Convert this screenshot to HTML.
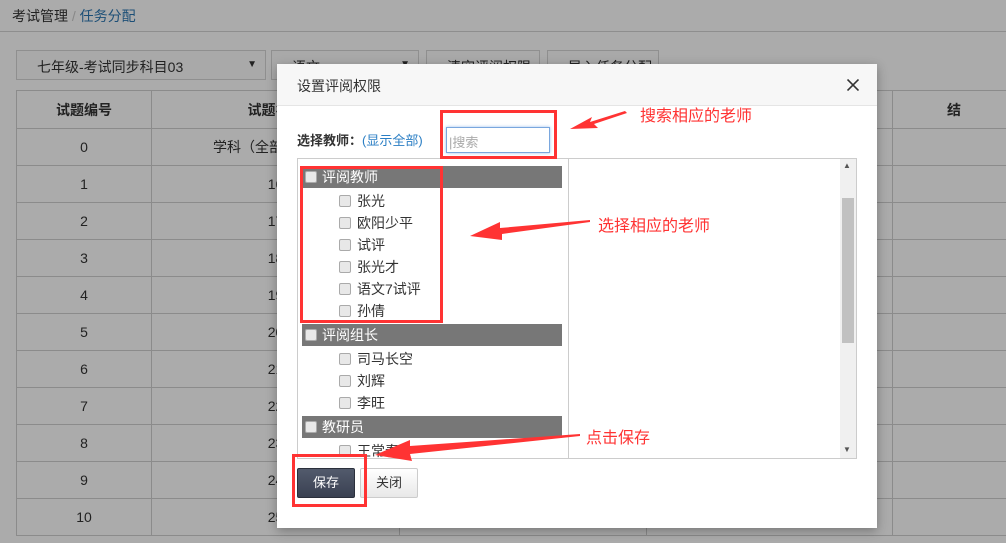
<!DOCTYPE html>
<html><head><meta charset="utf-8"><style>
*{margin:0;padding:0;box-sizing:border-box}
html{width:1006px;height:543px;overflow:hidden}
body{width:1006px;height:543px;overflow:hidden;background:#ababab;font-family:"Liberation Sans","Noto Sans CJK SC",sans-serif;font-size:13px;color:#333;position:relative}
.abs{position:absolute}
.bc{left:0;top:0;width:1006px;height:32px;border-bottom:1px solid #8e8e8e;padding:6px 12px;font-size:14px;color:#222}
.bc span{color:#1c4f77}
.dd{top:50px;height:30px;border:1px solid #8f8f8f;background:#a9a9a9;font-size:14px;color:#222;padding:6px 0 0 20px}
table{position:absolute;left:16px;top:90px;border-collapse:collapse;width:1000px}
td{border:1px solid #8b8b8b;height:37px;text-align:center;font-size:14px;color:#222}
th{border:1px solid #8b8b8b;height:38px;font-size:14px;color:#222}
.modal{left:277px;top:64px;width:600px;height:464px;background:#fff;box-shadow:0 3px 10px rgba(0,0,0,.3)}
.mh{position:absolute;left:0;top:0;width:600px;height:42px;background:#f7f7f7;border-bottom:1px solid #e5e5e5;padding:12px 20px;font-size:14px;color:#333}
.grp{position:absolute;left:25px;width:260px;height:22px;background:#777;color:#fff;font-size:14px;padding:1px 0 0 20px}
.cb{position:absolute;width:12px;height:12px;border:1px solid #aaa;border-radius:2px;background:#e8e8e8}
.it{position:absolute;left:80px;font-size:14px;color:#333}
.red{border:3px solid #f33;position:absolute}
.note{position:absolute;color:#f33;font-size:16px}
</style></head><body>
<div class="abs bc">考试管理 <b style="color:#888;font-weight:normal">/</b> <span>任务分配</span></div>
<div class="abs dd" style="left:16px;width:250px">七年级-考试同步科目03<span style="position:absolute;right:8px;top:8px;font-size:10px">▼</span></div>
<div class="abs dd" style="left:271px;width:148px">语文<span style="position:absolute;right:8px;top:8px;font-size:10px">▼</span></div>
<div class="abs dd" style="left:426px;width:114px">清空评阅权限</div>
<div class="abs dd" style="left:547px;width:112px">导入任务分配</div>
<table>
<tr><th style="width:135px">试题编号</th><th style="width:248px">试题名称</th><th style="width:247px"></th><th style="width:246px"></th><th>结</th></tr>
<tr><td>0</td><td style="text-align:left;padding-left:61px">学科（全部）</td><td></td><td></td><td></td></tr>
<tr><td>1</td><td>16</td><td></td><td></td><td></td></tr>
<tr><td>2</td><td>17</td><td></td><td></td><td></td></tr>
<tr><td>3</td><td>18</td><td></td><td></td><td></td></tr>
<tr><td>4</td><td>19</td><td></td><td></td><td></td></tr>
<tr><td>5</td><td>20</td><td></td><td></td><td></td></tr>
<tr><td>6</td><td>21</td><td></td><td></td><td></td></tr>
<tr><td>7</td><td>22</td><td></td><td></td><td></td></tr>
<tr><td>8</td><td>23</td><td></td><td></td><td></td></tr>
<tr><td>9</td><td>24</td><td></td><td></td><td></td></tr>
<tr><td>10</td><td>25</td><td></td><td></td><td></td></tr>
</table>
<div class="abs modal">
<div class="mh">设置评阅权限<svg style="position:absolute;right:18px;top:15px" width="12" height="12"><path d="M0.5 0.5L11.5 11.5M11.5 0.5L0.5 11.5" stroke="#333" stroke-width="1.6"/></svg></div>
<div class="abs" style="left:20px;top:66px;font-size:13px;font-weight:bold;color:#333">选择教师：<span style="font-weight:normal;color:#2a7ec4">(显示全部)</span></div>
<div class="abs" style="left:169px;top:63px;width:104px;height:26px;border:1px solid #7aa7de;box-shadow:0 0 3px #9bc0ef;font-size:13px;color:#aaa;padding:4px 2px">|搜索</div>
<div class="abs" style="left:20px;top:94px;width:560px;height:301px;border:1px solid #ccc;overflow:hidden">
 <div class="abs" style="left:270px;top:0;width:1px;height:300px;background:#ccc"></div>
 <div class="abs" style="left:542px;top:0;width:17px;height:300px;background:#f0f0f0"></div>
 <div class="abs" style="left:544px;top:39px;width:12px;height:145px;background:#c1c1c1"></div>
 <div class="abs" style="left:545px;top:2px;font-size:8px;color:#555">▲</div>
 <div class="abs" style="left:545px;top:286px;font-size:8px;color:#555">▼</div>
</div>
<div class="abs" style="left:20px;top:94px;width:270px;height:300px;overflow:hidden">
 <div class="grp" style="left:5px;top:8px">评阅教师</div><div class="cb" style="left:8px;top:13px"></div>
 <div class="cb" style="left:42px;top:37px"></div><div class="it" style="left:60px;top:33px">张光</div>
 <div class="cb" style="left:42px;top:59px"></div><div class="it" style="left:60px;top:55px">欧阳少平</div>
 <div class="cb" style="left:42px;top:81px"></div><div class="it" style="left:60px;top:77px">试评</div>
 <div class="cb" style="left:42px;top:103px"></div><div class="it" style="left:60px;top:99px">张光才</div>
 <div class="cb" style="left:42px;top:125px"></div><div class="it" style="left:60px;top:121px">语文7试评</div>
 <div class="cb" style="left:42px;top:147px"></div><div class="it" style="left:60px;top:143px">孙倩</div>
 <div class="grp" style="left:5px;top:166px">评阅组长</div><div class="cb" style="left:8px;top:171px"></div>
 <div class="cb" style="left:42px;top:195px"></div><div class="it" style="left:60px;top:191px">司马长空</div>
 <div class="cb" style="left:42px;top:217px"></div><div class="it" style="left:60px;top:213px">刘辉</div>
 <div class="cb" style="left:42px;top:239px"></div><div class="it" style="left:60px;top:235px">李旺</div>
 <div class="grp" style="left:5px;top:258px">教研员</div><div class="cb" style="left:8px;top:263px"></div>
 <div class="cb" style="left:42px;top:287px"></div><div class="it" style="left:60px;top:283px">王常春</div>
</div>
<div class="abs" style="left:20px;top:404px;width:58px;height:30px;background:linear-gradient(#525a6c,#3a4152);border:1px solid #2b303c;border-radius:2px;color:#fff;font-size:13px;text-align:center;line-height:28px">保存</div>
<div class="abs" style="left:83px;top:404px;width:58px;height:30px;background:linear-gradient(#fff,#e8e8e8);border:1px solid #ccc;border-radius:2px;color:#333;font-size:13px;text-align:center;line-height:28px">关闭</div>
</div>
<div class="red" style="left:440px;top:110px;width:117px;height:49px"></div>
<div class="red" style="left:300px;top:166px;width:143px;height:157px"></div>
<div class="red" style="left:292px;top:454px;width:75px;height:53px"></div>
<svg class="abs" style="left:0;top:0" width="1006" height="543">
<polygon points="625,111 590,122 592,117 570,129 598,128 594,124 627,113" fill="#f33"/>
<polygon points="590,220 500,228 500,222 470,236 502,240 502,234 590,222" fill="#f33"/>
<polygon points="580,434 410,446 410,440 375,455 412,461 410,454 580,436" fill="#f33"/>
</svg>
<div class="note" style="left:640px;top:102px">搜索相应的老师</div>
<div class="note" style="left:598px;top:212px">选择相应的老师</div>
<div class="note" style="left:586px;top:424px">点击保存</div>
</body></html>
